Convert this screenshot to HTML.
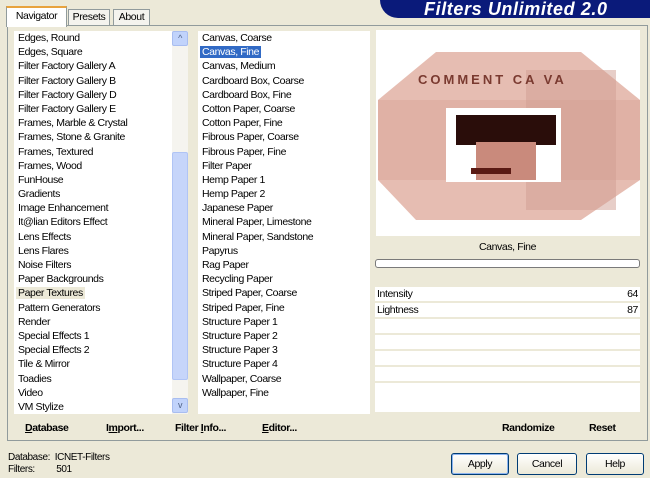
<!DOCTYPE html><html><head><style>
*{margin:0;padding:0;box-sizing:border-box}
body{width:650px;height:478px;background:#ece9d8;font-family:"Liberation Sans",sans-serif;font-size:10.5px;letter-spacing:-0.4px;color:#000;position:relative;overflow:hidden}
.a{position:absolute}
.list div{height:14.2px;line-height:14px;padding-left:4px;white-space:nowrap}
.btn{position:absolute;border:1px solid #003c74;border-radius:3px;background:linear-gradient(#fff,#ece9d8);text-align:center;line-height:20px}
.row{position:absolute;left:375px;width:265px;height:15px;background:#fff;border-bottom:1px solid #ece9d8}
.bb{font-weight:bold;position:absolute;top:422px}
</style></head><body>
<div class="a" style="left:380px;top:0;width:270px;height:18px;background:#0a1a7a;border-bottom-left-radius:20px;color:#fff;font-weight:bold;font-style:italic;font-size:18px;letter-spacing:0.6px;line-height:18px;padding-left:44px">Filters Unlimited 2.0</div>
<div class="a" style="left:7px;top:25px;width:641px;height:416px;border:1px solid #919b9c;background:#ece9d8"></div>
<div class="a" style="left:6px;top:6px;width:61px;height:21px;background:#fff;border:1px solid #919b9c;border-bottom:none;border-top:2px solid #e8a33e;line-height:17px;text-align:center">Navigator</div>
<div class="a" style="left:68px;top:9px;width:42px;height:17px;border:1px solid #919b9c;background:#f4f3ee;line-height:15px;text-align:center">Presets</div>
<div class="a" style="left:113px;top:9px;width:37px;height:17px;border:1px solid #919b9c;background:#f4f3ee;line-height:15px;text-align:center">About</div>
<div class="a list" style="left:14px;top:31px;width:158px;height:383px;background:#fff">
<div>Edges, Round</div><div>Edges, Square</div><div>Filter Factory Gallery A</div><div>Filter Factory Gallery B</div><div>Filter Factory Gallery D</div><div>Filter Factory Gallery E</div><div>Frames, Marble &amp; Crystal</div><div>Frames, Stone &amp; Granite</div><div>Frames, Textured</div><div>Frames, Wood</div><div>FunHouse</div><div>Gradients</div><div>Image Enhancement</div><div>It@lian Editors Effect</div><div>Lens Effects</div><div>Lens Flares</div><div>Noise Filters</div><div>Paper Backgrounds</div><div><span style="background:#ece9d8;padding:0 2px;margin-left:-2px">Paper Textures</span></div><div>Pattern Generators</div><div>Render</div><div>Special Effects 1</div><div>Special Effects 2</div><div>Tile &amp; Mirror</div><div>Toadies</div><div>Video</div><div>VM Stylize</div></div>
<div class="a" style="left:172px;top:31px;width:16px;height:383px;background:#f5f4ef"></div>
<div class="a" style="left:172px;top:31px;width:16px;height:15px;background:#c1d3fb;border:1px solid #a8bdf0;border-radius:2px;color:#4d6185;font-size:9px;text-align:center;line-height:13px">^</div>
<div class="a" style="left:172px;top:152px;width:16px;height:228px;background:#c6d5fa;border:1px solid #b0c4f5;border-radius:2px"></div>
<div class="a" style="left:172px;top:398px;width:16px;height:15px;background:#c1d3fb;border:1px solid #a8bdf0;border-radius:2px;color:#4d6185;font-size:9px;text-align:center;line-height:13px">v</div>
<div class="a list" style="left:198px;top:31px;width:172px;height:383px;background:#fff">
<div>Canvas, Coarse</div><div><span style="background:#316ac5;color:#fff;padding:0 2px;margin-left:-2px">Canvas, Fine</span></div><div>Canvas, Medium</div><div>Cardboard Box, Coarse</div><div>Cardboard Box, Fine</div><div>Cotton Paper, Coarse</div><div>Cotton Paper, Fine</div><div>Fibrous Paper, Coarse</div><div>Fibrous Paper, Fine</div><div>Filter Paper</div><div>Hemp Paper 1</div><div>Hemp Paper 2</div><div>Japanese Paper</div><div>Mineral Paper, Limestone</div><div>Mineral Paper, Sandstone</div><div>Papyrus</div><div>Rag Paper</div><div>Recycling Paper</div><div>Striped Paper, Coarse</div><div>Striped Paper, Fine</div><div>Structure Paper 1</div><div>Structure Paper 2</div><div>Structure Paper 3</div><div>Structure Paper 4</div><div>Wallpaper, Coarse</div><div>Wallpaper, Fine</div></div>
<div class="a" style="left:372px;top:28px;width:272px;height:386px;background:#ece9d8"></div>
<svg class="a" style="left:376px;top:30px" width="264" height="206">
<rect width="264" height="206" fill="#fff"/>
<polygon points="60,22 205,22 264,70 264,150 205,190 40,190 2,150 2,70" fill="#e6bdb2"/>
<rect x="2" y="70" width="262" height="80" fill="#d9a597" opacity=".5"/>
<rect x="150" y="40" width="90" height="140" fill="#cf9e92" opacity=".5"/>
<rect x="70" y="78" width="115" height="74" fill="#fff"/>
<rect x="80" y="85" width="100" height="30" fill="#2a0d0a"/>
<rect x="100" y="112" width="60" height="38" fill="#c98a7c"/>
<rect x="95" y="138" width="40" height="6" fill="#5a1a14"/>
<text x="42" y="54" font-size="13" font-weight="bold" fill="#7a3a30" letter-spacing="3" font-family="Liberation Sans">COMMENT CA VA</text>
</svg>
<div class="a" style="left:375px;top:236px;width:265px;height:22px;text-align:center;line-height:22px">Canvas, Fine</div>
<div class="a" style="left:375px;top:259px;width:265px;height:9px;border:1px solid #7a7a7a;border-radius:3px;background:#fff"></div>
<div class="row" style="top:287px;padding:1px 2px">Intensity<span style="float:right">64</span></div>
<div class="row" style="top:303px;padding:1px 2px">Lightness<span style="float:right">87</span></div>
<div class="row" style="top:319px"></div><div class="row" style="top:335px"></div><div class="row" style="top:351px"></div><div class="row" style="top:367px"></div><div class="row" style="top:383px;height:30px"></div>
<div class="bb" style="left:25px"><u>D</u>atabase</div>
<div class="bb" style="left:106px">I<u>m</u>port...</div>
<div class="bb" style="left:175px">Filter <u>I</u>nfo...</div>
<div class="bb" style="left:262px"><u>E</u>ditor...</div>
<div class="bb" style="left:502px">Randomize</div>
<div class="bb" style="left:589px">Reset</div>
<div class="a" style="left:8px;top:452px;line-height:12px;font-size:10px">Database:&nbsp;&nbsp;ICNET-Filters<br>Filters:&nbsp;&nbsp;&nbsp;&nbsp;&nbsp;&nbsp;&nbsp;&nbsp;&nbsp;501</div>
<div class="btn" style="left:451px;top:453px;width:58px;height:22px;box-shadow:inset 0 0 0 1px #8cb4f0">Apply</div>
<div class="btn" style="left:517px;top:453px;width:60px;height:22px">Cancel</div>
<div class="btn" style="left:586px;top:453px;width:58px;height:22px">Help</div>
</body></html>
